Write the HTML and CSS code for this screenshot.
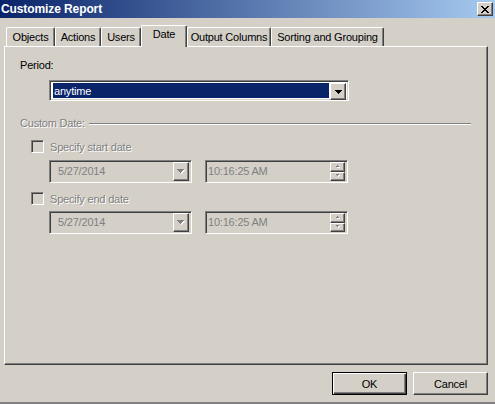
FILE: index.html
```html
<!DOCTYPE html>
<html>
<head>
<meta charset="utf-8">
<link rel="stylesheet" href="styles.css">
</head>
<body>
<div class="window">
  <div class="titlebar">
    <span class="title">Customize Report</span>
    <div class="close raised">
      <svg width="8" height="7" viewBox="0 0 8 7"><path d="M0 0h2v1H0zM6 0h2v1H6zM1 1h2v1H1zM5 1h2v1H5zM2 2h4v1H2zM3 3h2v1H3zM2 4h4v1H2zM1 5h2v1H1zM5 5h2v1H5zM0 6h2v1H0zM6 6h2v1H6z" fill="#000"/></svg>
    </div>
  </div>

  <div class="tabs">
    <div class="tab t-objects">Objects</div>
    <div class="tab t-actions">Actions</div>
    <div class="tab t-users">Users</div>
    <div class="tab t-date active">Date</div>
    <div class="tab t-output">Output Columns</div>
    <div class="tab t-sorting">Sorting and Grouping</div>
  </div>

  <div class="panel">
    <div class="label">Period:</div>
    <div class="combo sunken">
      <div class="combo-value"><span class="sel">anytime</span></div>
      <div class="dropbtn raised">
        <svg width="7" height="4" viewBox="0 0 7 4"><path d="M0 0h7v1H0zM1 1h5v1H1zM2 2h3v1H2zM3 3h1v1H3z" fill="#000"/></svg>
      </div>
    </div>

    <div class="group-head">
      <span class="etched">Custom Date:</span>
      <span class="rule"></span>
    </div>

    <div class="check-row">
      <span class="checkbox sunken"></span>
      <span class="etched">Specify start date</span>
    </div>
    <div class="picker-row">
      <div class="field date sunken">
        <span class="field-text">5/27/2014</span>
        <div class="dropbtn raised small">
          <svg width="8" height="5" viewBox="0 0 8 5"><path d="M1 1h7v1H1zM2 2h5v1H2zM3 3h3v1H3zM4 4h1v1H4z" fill="#fff"/><path d="M0 0h7v1H0zM1 1h5v1H1zM2 2h3v1H2zM3 3h1v1H3z" fill="#808080"/></svg>
        </div>
      </div>
      <div class="field time sunken">
        <span class="field-text">10:16:25 AM</span>
        <div class="spin">
          <div class="spin-btn raised"><svg width="6" height="4" viewBox="0 0 6 4"><path d="M3 1h1v1H3zM2 2h3v1H2z" fill="#fff"/><path d="M2 0h1v1H2zM1 1h3v1H1z" fill="#808080"/></svg></div>
          <div class="spin-btn raised"><svg width="6" height="4" viewBox="0 0 6 4"><path d="M2 1h3v1H2zM3 2h1v1H3z" fill="#fff"/><path d="M1 0h3v1H1zM2 1h1v1H2z" fill="#808080"/></svg></div>
        </div>
      </div>
    </div>

    <div class="check-row second">
      <span class="checkbox sunken"></span>
      <span class="etched">Specify end date</span>
    </div>
    <div class="picker-row second">
      <div class="field date sunken">
        <span class="field-text">5/27/2014</span>
        <div class="dropbtn raised small">
          <svg width="8" height="5" viewBox="0 0 8 5"><path d="M1 1h7v1H1zM2 2h5v1H2zM3 3h3v1H3zM4 4h1v1H4z" fill="#fff"/><path d="M0 0h7v1H0zM1 1h5v1H1zM2 2h3v1H2zM3 3h1v1H3z" fill="#808080"/></svg>
        </div>
      </div>
      <div class="field time sunken">
        <span class="field-text">10:16:25 AM</span>
        <div class="spin">
          <div class="spin-btn raised"><svg width="6" height="4" viewBox="0 0 6 4"><path d="M3 1h1v1H3zM2 2h3v1H2z" fill="#fff"/><path d="M2 0h1v1H2zM1 1h3v1H1z" fill="#808080"/></svg></div>
          <div class="spin-btn raised"><svg width="6" height="4" viewBox="0 0 6 4"><path d="M2 1h3v1H2zM3 2h1v1H3z" fill="#fff"/><path d="M1 0h3v1H1zM2 1h1v1H2z" fill="#808080"/></svg></div>
        </div>
      </div>
    </div>
  </div>

  <div class="footer">
    <div class="btn default">OK</div>
    <div class="btn raised">Cancel</div>
  </div>
</div>
</body>
</html>
```

FILE: styles.css
```css
* { box-sizing: border-box; }

html, body {
  margin: 0;
  padding: 0;
  background: #d4d0c8;
}

body {
  font-family: "Liberation Sans", Arial, sans-serif;
  font-size: 11px;
  letter-spacing: -0.2px;
  color: #000;
}

.window {
  width: 495px;
  height: 404px;
  display: flex;
  flex-direction: column;
  background: #d4d0c8;
  border-bottom: 2px solid #808080;
}

.raised {
  border: 1px solid;
  border-color: #fff #404040 #404040 #fff;
  box-shadow: inset -1px -1px #808080;
  background: #d4d0c8;
}

.sunken {
  border: 1px solid;
  border-color: #808080 #fff #fff #808080;
  box-shadow: inset 1px 1px #404040, inset -1px -1px #d4d0c8;
}

/* title bar */
.titlebar {
  height: 18px;
  flex: none;
  display: flex;
  align-items: center;
  justify-content: space-between;
  padding: 0 2px 0 1px;
  background: linear-gradient(90deg, #0a246a 0%, #a6caf0 100%);
}

.title {
  color: #fff;
  font-weight: bold;
  font-size: 12px;
  letter-spacing: -0.1px;
  line-height: 14px;
}

.close {
  width: 16px;
  height: 14px;
  display: flex;
  align-items: center;
  justify-content: center;
  padding-right: 1px;
}

.close svg { display: block; }

/* tabs */
.tabs {
  flex: none;
  height: 21px;
  margin-top: 7px;
  padding-left: 6px;
  display: flex;
  align-items: flex-end;
}

.tab {
  height: 19px;
  border-top: 1px solid #fff;
  border-left: 1px solid #fff;
  border-right: 1px solid #404040;
  box-shadow: inset -1px 0 #808080;
  border-radius: 2px 2px 0 0;
  text-align: center;
  line-height: 13px;
  padding-top: 3px;
  white-space: nowrap;
}

.tab.active {
  position: relative;
  z-index: 1;
  height: 22px;
  margin-bottom: -1px;
  padding-top: 2px;
  background: #d4d0c8;
}

.t-objects { width: 49px; }
.t-actions { width: 46px; }
.t-users { width: 40px; }
.t-date { width: 46px; }
.t-output { width: 84px; }
.t-sorting { width: 113px; }

/* panel */
.panel {
  flex: none;
  height: 319px;
  margin: 0 7px 0 4px;
  border-top: 1px solid #fff;
  border-left: 1px solid #fff;
  border-right: 1px solid #404040;
  border-bottom: 1px solid #404040;
  box-shadow: inset -1px -1px #808080;
  padding: 12px 0 0 15px;
}

.label {
  line-height: 13px;
}

.combo {
  margin: 8px 0 0 29px;
  width: 300px;
  height: 21px;
  display: flex;
  padding: 2px;
  background: #fff;
}

.combo-value {
  flex: 1;
  padding: 0 1px 0 1px;
  background: #fff;
  display: flex;
}

.sel {
  flex: 1;
  background: #0a246a;
  color: #fff;
  line-height: 17px;
  padding-left: 1px;
}

.dropbtn {
  width: 16px;
  height: 17px;
  display: flex;
  align-items: center;
  justify-content: center;
  flex: none;
}

.dropbtn svg { display: block; }

.group-head {
  margin-top: 16px;
  display: flex;
  align-items: center;
  line-height: 13px;
  padding-right: 16px;
}

.etched {
  color: #808080;
  text-shadow: 1px 1px 0 #fff;
}

.rule {
  flex: 1;
  margin-left: 4px;
  height: 2px;
  border-top: 1px solid #808080;
  border-bottom: 1px solid #fff;
}

.check-row {
  margin: 10px 0 0 11px;
  display: flex;
  align-items: center;
  gap: 6px;
  height: 13px;
}

.check-row.second { margin-top: 9px; }

.checkbox {
  width: 13px;
  height: 13px;
  flex: none;
  background: #d4d0c8;
}

.picker-row {
  margin: 7px 0 0 29px;
  display: flex;
  gap: 13px;
}

.picker-row.second { margin-top: 6px; }

.field {
  width: 143px;
  height: 23px;
  padding: 2px;
  display: flex;
  align-items: center;
  background: #d4d0c8;
}

.field-text {
  flex: 1;
  color: #808080;
  line-height: 19px;
}

.date .field-text { padding-left: 6px; }
.time .field-text { padding-left: 0; }

.dropbtn.small {
  width: 16px;
  height: 19px;
  margin-right: 0;
}

.spin {
  width: 15px;
  height: 19px;
  display: flex;
  flex-direction: column;
  flex: none;
}

.spin-btn {
  flex: 1;
  display: flex;
  align-items: center;
  justify-content: center;
}

.spin-btn svg { display: block; }

/* footer */
.footer {
  flex: none;
  display: flex;
  justify-content: flex-end;
  gap: 6px;
  margin-top: 7px;
  padding-right: 7px;
}

.btn {
  width: 75px;
  height: 23px;
  display: flex;
  align-items: center;
  justify-content: center;
  line-height: 13px;
  padding-top: 1px;
}

.btn.default {
  border: 1px solid #000;
  box-shadow: inset 1px 1px #fff, inset -1px -1px #404040, inset -2px -2px #808080;
  background: #d4d0c8;
}
```
